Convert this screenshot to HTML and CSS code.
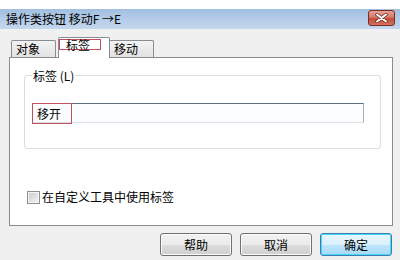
FILE: index.html
```html
<!DOCTYPE html>
<html>
<head>
    <meta charset="utf-8">
    <title>操作类按钮</title>
    <link rel="stylesheet" href="styles.css">
</head>
<body>
    <div class="strip"></div>
    <div class="titlebar">
        <span class="title">操作类按钮 移动F →E</span>
        <div class="close">
            <svg width="13" height="10" viewBox="0 0 13 10">
                <path d="M2 1.5 L11 8.5 M11 1.5 L2 8.5" stroke="#6b2a22" stroke-width="3.4" stroke-linecap="round"/>
                <path d="M2 1.5 L11 8.5 M11 1.5 L2 8.5" stroke="#fff" stroke-width="2" stroke-linecap="round"/>
            </svg>
        </div>
    </div>

    <div class="dialog">
        <div class="tabs">
            <div class="tab first">对象</div>
            <div class="tab active"><span class="mark">标签</span></div>
            <div class="tab last">移动</div>
        </div>

        <div class="panel">
            <fieldset class="group">
                <legend>标签 (L)</legend>
                <div class="field"><span class="mark-input">移开</span></div>
            </fieldset>
            <label class="check">
                <span class="box"></span>
                在自定义工具中使用标签
            </label>
        </div>

        <div class="buttons">
            <div class="btn">帮助</div>
            <div class="btn">取消</div>
            <div class="btn default">确定</div>
        </div>
    </div>
</body>
</html>
```

FILE: styles.css
```css
body {
    margin: 0;
    width: 400px;
    height: 260px;
    overflow: hidden;
    background: #f0f0f0;
    font-family: "Noto Sans CJK SC", "DejaVu Sans", sans-serif;
    font-size: 12px;
    color: #000;
}
.strip {
    height: 9px;
    background: #fff;
}
.titlebar {
    height: 20px;
    display: flex;
    align-items: flex-start;
    justify-content: space-between;
    padding: 0 5px 0 6px;
    background: linear-gradient(to bottom, #a2bfe0, #c4d8ee);
}
.title {
    line-height: 18px;
    margin-top: 1px;
}
.close {
    width: 27px;
    height: 16px;
    margin-top: 1px;
    box-sizing: border-box;
    border: 1px solid #7a2e26;
    border-radius: 3px;
    background: linear-gradient(to bottom, #e6a195 0%, #d47868 45%, #c24a38 55%, #d5735f 100%);
    display: flex;
    align-items: center;
    justify-content: center;
}
.dialog {
    padding: 0 7px 0 9px;
}
.tabs {
    display: flex;
    align-items: flex-end;
    height: 20px;
    margin-top: 8px;
}
.tab {
    height: 17px;
    box-sizing: border-box;
    border: 1px solid #898c95;
    border-bottom: none;
    border-radius: 2px 2px 0 0;
    background: linear-gradient(to bottom, #f3f3f3, #e2e2e2);
    padding-left: 4px;
    line-height: 16px;
}
.tab.first {
    width: 45px;
    margin-left: 2px;
}
.tab.last {
    width: 45px;
    margin-left: -1px;
}
.tab.active {
    position: relative;
    z-index: 1;
    width: 52px;
    height: 21px;
    margin-left: 2px;
    margin-bottom: -1px;
    background: #fff;
    padding-left: 0;
}
.mark {
    display: block;
    width: 42px;
    height: 11px;
    margin-top: 1px;
    box-sizing: border-box;
    border: 1px solid #c0505c;
    padding-left: 6px;
    line-height: 10px;
}
.panel {
    width: 384px;
    height: 169px;
    box-sizing: border-box;
    border: 1px solid #898c95;
    background: #fff;
}
.group {
    width: 357px;
    box-sizing: border-box;
    margin: 11px 0 0 14px;
    padding: 0 7px 25px;
    border: 1px solid #d5dfe5;
    border-radius: 3px;
}
.group legend {
    padding: 0 1px;
    line-height: 13px;
}
.field {
    width: 332px;
    height: 20px;
    margin-top: 21px;
    box-sizing: border-box;
    border: 1px solid #abadb3;
    border-top-color: #5e6d7e;
    border-bottom-color: #dbdfe6;
    background: #fcfdfe;
    display: flex;
}
.mark-input {
    width: 40px;
    height: 21px;
    margin: -1px 0 -1px -1px;
    box-sizing: border-box;
    border: 1px solid #c0505c;
    padding-left: 4px;
    line-height: 19px;
}
.check {
    display: flex;
    align-items: center;
    gap: 2px;
    margin: 41px 0 0 17px;
    line-height: 14px;
}
.box {
    width: 13px;
    height: 13px;
    box-sizing: border-box;
    border: 1px solid #8f8f8f;
    background: linear-gradient(135deg, #cbcbcb, #f4f4f4);
    box-shadow: inset 0 0 0 1px #f4f4f4;
}
.buttons {
    display: flex;
    justify-content: flex-end;
    gap: 8px;
    margin: 7px 1px 0 0;
}
.btn {
    width: 72px;
    height: 23px;
    box-sizing: border-box;
    border: 1px solid #707070;
    border-radius: 3px;
    background: linear-gradient(to bottom, #f2f2f2 0%, #ebebeb 50%, #dddddd 51%, #cfcfcf 100%);
    box-shadow: inset 0 0 0 1px #fcfcfc;
    text-align: center;
    line-height: 21px;
}
.btn.default {
    border-color: #3c7fb1;
    background: linear-gradient(to bottom, #eaf6fd 0%, #d9f0fc 50%, #bee6fd 51%, #a7d9f5 100%);
    box-shadow: inset 0 0 0 1px #48d8fb;
}
```
